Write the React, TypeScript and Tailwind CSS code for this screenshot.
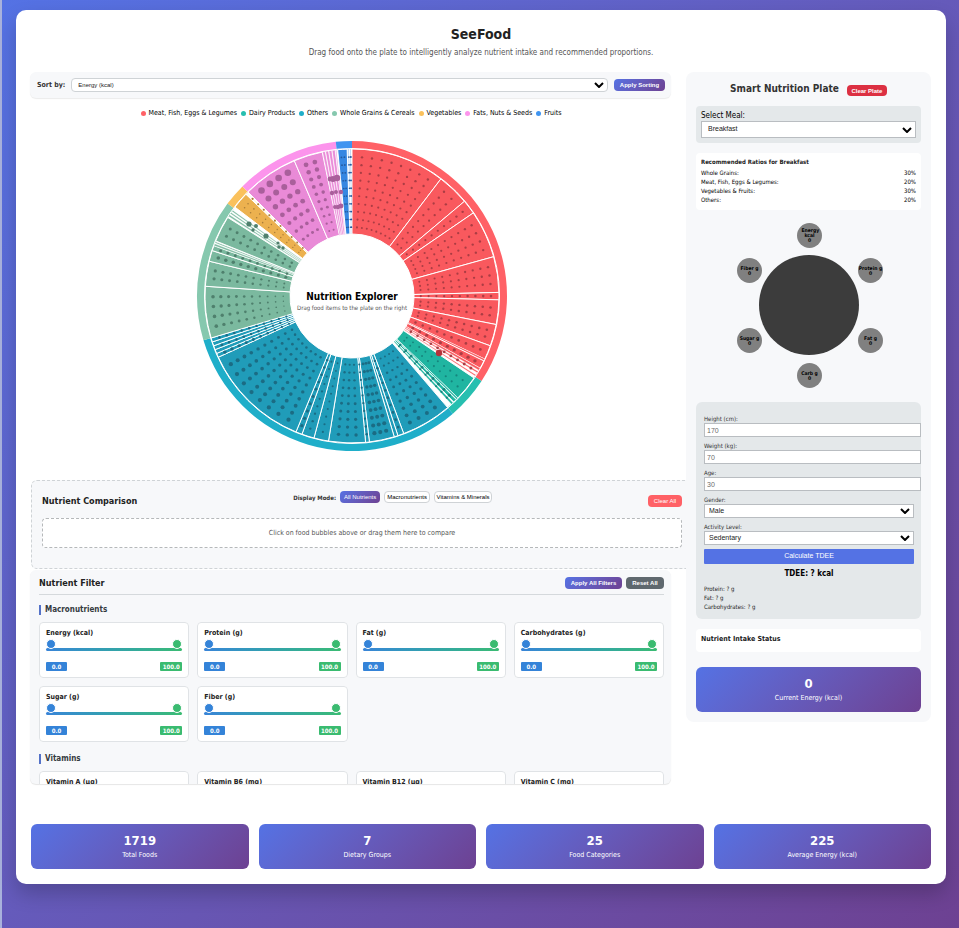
import React from "react";
import { clsx } from "clsx";

type Slice = { from: number; to: number; cols: number; r: number; shrink?: number; rows?: number; step?: number };
type Group = {
  name: string;
  ring: string;
  fill: string;
  from: number;
  to: number;
  dot: string;
  slices: Slice[];
};

const groups: Group[] = [
  {
    name: "Meat, Fish, Eggs & Legumes", ring: "#ff6166", fill: "#f9595e", from: 0, to: 123.3, dot: "#ab3d44",
    slices: [
      { from: 0, to: 37.2, cols: 8, r: 1.2 },
      { from: 37.2, to: 49.9, cols: 2, r: 1.2 },
      { from: 49.9, to: 55.6, cols: 1, r: 1.2 },
      { from: 55.6, to: 74.5, cols: 4, r: 1.2 },
      { from: 74.5, to: 88.6, cols: 3, r: 1.2 },
      { from: 88.6, to: 91.5, cols: 1, r: 1.3 },
      { from: 91.5, to: 101.2, cols: 2, r: 1.3 },
      { from: 101.2, to: 109.8, cols: 2, r: 1.3 },
      { from: 109.8, to: 115.4, cols: 1, r: 1.4 },
      { from: 115.4, to: 116.2, cols: 0, r: 1 },
      { from: 116.2, to: 119.4, cols: 1, r: 1.7 },
      { from: 119.4, to: 120.3, cols: 0, r: 1 },
      { from: 120.9, to: 121.5, cols: 1, r: 1.5 },
      { from: 122.5, to: 123, cols: 0, r: 1 },
    ],
  },
  {
    name: "Dairy Products", ring: "#27bfb0", fill: "#20b5a1", from: 123.3, to: 139.4, dot: "#15857d",
    slices: [
      { from: 123.9, to: 133.9, cols: 2, r: 1.1 },
      { from: 134, to: 134.6, cols: 0, r: 1 },
      { from: 134.8, to: 136.2, cols: 1, r: 1.5 },
      { from: 136.6, to: 137.4, cols: 1, r: 1.1 },
    ],
  },
  {
    name: "Others", ring: "#1faec9", fill: "#209cb9", from: 139.4, to: 253.4, dot: "#1b6c84",
    slices: [
      { from: 139.4, to: 159.4, cols: 4, r: 2, shrink: 0.5 },
      { from: 159.4, to: 161.8, cols: 1, r: 1.4 },
      { from: 161.8, to: 163.3, cols: 0, r: 1 },
      { from: 163.3, to: 173.2, cols: 3, r: 2.1, shrink: 0.3 },
      { from: 173.2, to: 174.7, cols: 1, r: 1.2 },
      { from: 174.7, to: 189.2, cols: 3, r: 1.7, shrink: 0.35 },
      { from: 189.2, to: 195, cols: 1, r: 1.1 },
      { from: 195, to: 199.9, cols: 1, r: 1.2 },
      { from: 199.9, to: 202.4, cols: 1, r: 1.7, shrink: 0.3 },
      { from: 202.4, to: 245.4, cols: 8, r: 2.1, shrink: 0.4 },
      { from: 245.4, to: 247, cols: 1, r: 1.7, shrink: 0.4 },
      { from: 247, to: 248.6, cols: 0, r: 1 },
      { from: 248.6, to: 250.2, cols: 1, r: 1.3 },
      { from: 250.2, to: 251.8, cols: 0, r: 1 },
      { from: 251.8, to: 253.4, cols: 1, r: 1.3 },
    ],
  },
  {
    name: "Whole Grains & Cereals", ring: "#86c8ae", fill: "#7bb99f", from: 253.4, to: 306.6, dot: "#4f806d",
    slices: [
      { from: 253.4, to: 273.8, cols: 4, r: 1.8, shrink: 0.6 },
      { from: 273.8, to: 283.7, cols: 2, r: 1.6, shrink: 0.4 },
      { from: 283.7, to: 288, cols: 1, r: 1.8 },
      { from: 288, to: 290, cols: 1, r: 1.5 },
      { from: 290.1, to: 290.8, cols: 0, r: 1 },
      { from: 291.2, to: 291.7, cols: 0, r: 1 },
      { from: 292, to: 302.3, cols: 2, r: 1.5 },
      { from: 302.9, to: 303.5, cols: 0, r: 1 },
      { from: 304.1, to: 304.6, cols: 0, r: 1 },
      { from: 305.2, to: 305.7, cols: 0, r: 1 },
    ],
  },
  {
    name: "Vegetables", ring: "#fac15c", fill: "#ecb14f", from: 306.6, to: 315, dot: "#a97d39",
    slices: [
      { from: 307.2, to: 313.8, cols: 2, r: 0.8 },
      { from: 314.3, to: 314.4, cols: 1, r: 1.1 },
    ],
  },
  {
    name: "Fats, Nuts & Seeds", ring: "#fc94ec", fill: "#e98ad7", from: 315, to: 354, dot: "#a95f9b",
    slices: [
      { from: 315, to: 336.9, cols: 4, r: 3.3, shrink: 0.55, rows: 7, step: 10.7 },
      { from: 336.9, to: 348.3, cols: 2, r: 2.4, shrink: 0.6 },
      { from: 348.5, to: 349.4, cols: 0, r: 1 },
      { from: 349.7, to: 350.7, cols: 0, r: 1 },
      { from: 351, to: 352, cols: 0, r: 1 },
      { from: 352.3, to: 353.3, cols: 0, r: 1 },
      { from: 353.6, to: 353.9, cols: 0, r: 1 },
    ],
  },
  {
    name: "Fruits", ring: "#3f94f0", fill: "#3687e2", from: 354, to: 360, dot: "#24599d",
    slices: [
      { from: 354.4, to: 358.1, cols: 2, r: 0.9 },
      { from: 358.6, to: 358.8, cols: 1, r: 0.9 },
      { from: 359.4, to: 359.6, cols: 1, r: 1 },
    ],
  },
];

const at = (radius: number, deg: number) => {
  const a = (deg * Math.PI) / 180;
  return [radius * Math.sin(a), -radius * Math.cos(a)];
};

const sector = (r0: number, r1: number, from: number, to: number) => {
  const large = to - from > 180 ? 1 : 0;
  const [ax, ay] = at(r1, from);
  const [bx, by] = at(r1, to);
  const [cx, cy] = at(r0, to);
  const [dx, dy] = at(r0, from);
  return `M${ax} ${ay}A${r1} ${r1} 0 ${large} 1 ${bx} ${by}L${cx} ${cy}A${r0} ${r0} 0 ${large} 0 ${dx} ${dy}Z`;
};

function Sunburst() {
  return (
    <svg viewBox="-160 -160 320 320" className="h-[320px] w-[320px]" role="img" aria-label="Nutrition Explorer">
      {groups.map((g) => (
        <g key={g.name}>
          <path d={sector(147, 155, g.from, g.to)} fill={g.ring} />
          {g.slices.map((s) => (
            <path
              key={s.from}
              d={sector(62, 147, s.from, s.to)}
              fill={g.fill}
              stroke="#fff"
              strokeWidth={s.to - s.from > 1 ? 1 : 0.3}
            />
          ))}
        </g>
      ))}
      <circle r="147.5" fill="none" stroke="#fff" strokeWidth="1" />
      {groups.map((g) => (
        <g key={g.name} fill={g.dot}>
          {g.slices.map((s) => {
            const count = s.rows ?? 10;
            return Array.from({ length: count }, (_, row) =>
              Array.from({ length: s.cols }, (_, c) => {
                const [x, y] = at(139 - row * (s.step ?? 7.8), s.from + ((c + 1) * (s.to - s.from)) / (s.cols + 1));
                const r = s.r * (1 - ((s.shrink ?? 0.15) * row) / (count - 1));
                return <circle key={`${s.from}-${row}-${c}`} cx={x} cy={y} r={r} />;
              })
            );
          })}
        </g>
      ))}
      <g fill="#a95f9b">
        {[[-22, -117, 2.4], [-19, -117, 3], [-15, -118, 3.2], [-20, -103, 2.2], [-16, -104, 2], [-11, -104, 2.2], [-17, -89, 2], [-14, -89, 2.2], [-11, -90, 2.4]].map(([x, y, r]) => (
          <circle key={`${x},${y}`} cx={x} cy={y} r={r} />
        ))}
      </g>
      <g fill="#4f806d">
        {[[-103, -72, 2.6], [-96, -70, 2], [-99, -66, 1.7], [-86, -60, 2.6], [-74, -53, 1.6], [-73, -49, 1.8], [-69, -48, 1.7]].map(([x, y, r]) => (
          <circle key={`${x},${y}`} cx={x} cy={y} r={r} />
        ))}
      </g>
      <circle cx="87" cy="57" r="3.2" fill="#b5333a" />
      <text y="4" textAnchor="middle" fontSize="10" fontWeight="700">Nutrition Explorer</text>
      <text y="14" textAnchor="middle" fontSize="6" fill="#555">Drag food items to the plate on the right</text>
    </svg>
  );
}

function Chevron() {
  return (
    <svg viewBox="0 0 10 6" className="pointer-events-none absolute top-1/2 right-1 h-1.5 w-2.5 -translate-y-1/2" aria-hidden="true">
      <path d="M1 1l4 4 4-4" fill="none" stroke="#000" strokeWidth="2" />
    </svg>
  );
}

function Select({ id, options, className, wrap }: { id: string; options: string[]; className?: string; wrap?: string }) {
  return (
    <div className={clsx("relative", wrap)}>
      <select
        id={id}
        className={clsx(
          "block w-full appearance-none border bg-white font-['Liberation_Sans',sans-serif] text-[#222]",
          className
        )}
      >
        {options.map((o) => (
          <option key={o}>{o}</option>
        ))}
      </select>
      <Chevron />
    </div>
  );
}

const arial = "font-['Liberation_Sans',sans-serif]";
const brand = "bg-linear-135 from-[#5472e4] to-[#6d4192]";

function Stat({ value, label }: { value: string; label: string }) {
  return (
    <div className={clsx(brand, "flex h-[45px] flex-col items-center justify-center rounded-md pt-px text-white")}>
      <div className="text-[13px] leading-4 font-bold">{value}</div>
      <div className="text-[7px] leading-3">{label}</div>
    </div>
  );
}

const thumb =
  "pointer-events-none absolute inset-x-0 top-0 m-0 h-2.5 w-full appearance-none bg-transparent [&::-webkit-slider-thumb]:pointer-events-auto [&::-webkit-slider-thumb]:h-2.5 [&::-webkit-slider-thumb]:w-2.5 [&::-webkit-slider-thumb]:appearance-none [&::-webkit-slider-thumb]:rounded-full [&::-webkit-slider-thumb]:border [&::-webkit-slider-thumb]:border-solid [&::-webkit-slider-thumb]:border-white";

function FilterCard({ name }: { name: string }) {
  return (
    <fieldset className="h-14 rounded border border-[#e0e3e6] bg-white px-1.5 pt-1.5">
      <div className="text-[7px] leading-[9px] font-bold text-[#222]">{name}</div>
      <div className="relative mt-px h-3">
        <div className="absolute inset-x-0 top-[9px] h-[3px] rounded-sm bg-linear-to-r from-[#3984d8] to-[#3bbb72]" />
        <input type="range" aria-label={`${name} minimum`} defaultValue={0} className={clsx(thumb, "[&::-webkit-slider-thumb]:bg-[#3483d8]")} />
        <input type="range" aria-label={`${name} maximum`} defaultValue={100} className={clsx(thumb, "[&::-webkit-slider-thumb]:bg-[#3abb70]")} />
      </div>
      <div className="mt-[11px] flex justify-between text-center text-[6px] leading-[9px] font-bold text-white">
        <span className="w-[21px] rounded-[1px] bg-[#3483d8]">0.0</span>
        <span className="w-[22px] rounded-[1px] bg-[#3abb70]">100.0</span>
      </div>
    </fieldset>
  );
}

function FilterGroup({ title, items }: { title: string; items: string[] }) {
  return (
    <section className="mb-3">
      <h3 className="mb-[7px] border-l-2 border-[#5472c8] pl-1 text-[8px] leading-[10px] font-bold text-[#343a40]">{title}</h3>
      <div className="grid grid-cols-4 gap-2">
        {items.map((i) => (
          <FilterCard key={i} name={i} />
        ))}
      </div>
    </section>
  );
}

const nodes = [
  { text: "Energy kcal", pos: "left-[101px] top-[13px]" },
  { text: "Protein g", pos: "left-[162px] top-[48px]" },
  { text: "Fat g", pos: "left-[162px] top-[118px]" },
  { text: "Carb g", pos: "left-[101px] top-[153px]" },
  { text: "Sugar g", pos: "left-[41px] top-[118px]" },
  { text: "Fiber g", pos: "left-[41px] top-[48px]" },
];

function Plate() {
  return (
    <div className="relative mx-auto h-48 w-[225px]">
      <div className="absolute top-[45px] left-[63px] h-[100px] w-[100px] rounded-full bg-[#3c3c3c]" />
      {nodes.map((n) => (
        <div
          key={n.text}
          className={clsx(
            "absolute flex h-[25px] w-[25px] flex-col items-center justify-center rounded-full bg-[#808080] text-center text-[5px] leading-[5px] font-bold text-black",
            n.pos
          )}
        >
          <span className={n.text === "Energy kcal" ? "w-4" : "whitespace-nowrap"}>{n.text}</span>
          <span>0</span>
        </div>
      ))}
    </div>
  );
}

function Field({ id, label, children }: { id: string; label: string; children: React.ReactNode }) {
  return (
    <div className="mb-1">
      <label htmlFor={id} className="block text-[6px] leading-[9px] text-[#333]">{label}</label>
      {children}
    </div>
  );
}

function NumberField({ id, label, value }: { id: string; label: string; value: string }) {
  return (
    <Field id={id} label={label}>
      <div className="-mr-[7px]">
        <input
          id={id}
          placeholder={value}
          className={clsx(arial, "block h-3.5 w-full border border-[#b9bdc1] bg-white px-0.5 text-[7px] placeholder:text-[#6b6b6b]")}
        />
      </div>
    </Field>
  );
}

export default function App() {
  const ratios = [
    ["Whole Grains:", "30%"],
    ["Meat, Fish, Eggs & Legumes:", "20%"],
    ["Vegetables & Fruits:", "30%"],
    ["Others:", "20%"],
  ];
  return (
    <div className="min-h-screen border-l-2 border-[#a9b2dc] bg-linear-135 from-[#5472e4] to-[#6d4192] pt-2.5 pr-[13px] pb-11 pl-3.5 font-['DejaVu_Sans_Condensed','DejaVu_Sans',sans-serif] text-black">
      <div className="rounded-[10px] bg-white p-[15px] shadow-[0_10px_20px_rgba(0,0,0,0.2)]">
        <header className="h-[47px] text-center">
          <h1 className="text-[14px] leading-[18px] font-bold text-[#222]">SeeFood</h1>
          <p className="mt-[3px] text-[8px] leading-[14px] text-[#555]">
            Drag food onto the plate to intelligently analyze nutrient intake and recommended proportions.
          </p>
        </header>

        <div className="grid grid-cols-[minmax(0,1fr)_245px] items-start gap-[15px]">
          <main>
            <div className="-ml-px flex h-[26px] items-center gap-1.5 rounded-md bg-[#f7f8fa] pr-1.5 pl-[7px] shadow-[0_1px_1px_rgba(0,0,0,0.08)]">
              <label htmlFor="sort" className="text-[7px] font-bold text-[#333]">Sort by:</label>
              <Select id="sort" wrap="flex-1" options={["Energy (kcal)"]} className="h-3.5 rounded-sm border-[#cfd3d6] pl-1.5 text-[6px]" />
              <button className={clsx(arial, brand, "h-3 w-[51px] rounded-sm text-[6px] font-bold text-white")}>Apply Sorting</button>
            </div>

            <ul className="mt-[9px] flex h-3 items-center justify-center gap-1 text-[7px] leading-3">
              {groups.map((g) => (
                <li key={g.name} className="flex items-center gap-[3px] whitespace-nowrap">
                  <svg viewBox="0 0 6 6" className="h-[5px] w-[5px]" aria-hidden="true">
                    <circle cx="3" cy="3" r="3" fill={g.ring} />
                  </svg>
                  {g.name}
                </li>
              ))}
            </ul>

            <div className="flex h-[361px] justify-center pt-[17px] pl-0.5">
              <Sunburst />
            </div>

            <section className="-mr-[22px] h-[89px] rounded-md border border-dashed border-[#cfd3d6] bg-[#f7f8fa] px-2.5 pt-2.5">
              <div className="flex h-3 items-start justify-between">
                <h2 className="pt-1 text-[9px] leading-3 font-bold text-[#222]">Nutrient Comparison</h2>
                <div className="flex items-center gap-1">
                  <span className="text-[6px] font-bold text-[#333]">Display Mode:</span>
                  <button className={clsx(arial, brand, "h-3 w-10 rounded-sm text-[6px] text-white")}>All Nutrients</button>
                  <button className={clsx(arial, "h-3 w-[46px] rounded-sm border border-[#cfd3d6] bg-white text-[6px] leading-none")}>Macronutrients</button>
                  <button className={clsx(arial, "h-3 w-[58px] rounded-sm border border-[#cfd3d6] bg-white text-[6px] leading-none whitespace-nowrap")}>Vitamins &amp; Minerals</button>
                </div>
                <button className={clsx(arial, "mt-1 h-3 w-[34px] rounded-sm bg-[#ff6166] text-[6px] text-white")}>Clear All</button>
              </div>
              <div className="mt-[15px] flex h-[30px] items-center justify-center rounded-sm border border-dashed border-[#b5b8ba] bg-white text-[7px] text-[#555]">
                Click on food bubbles above or drag them here to compare
              </div>
            </section>

            <section className="mt-px -ml-px h-[214px] overflow-hidden rounded-md bg-[#f7f8fa] pt-1.5 pr-[7px] pl-[9px] shadow-[0_1px_1px_rgba(0,0,0,0.1)]">
              <div className="mb-2.5 flex h-[19px] items-start gap-1 border-b border-[#d5d9dc]">
                <h2 className="flex-1 text-[9px] leading-[14px] font-bold text-[#222]">Nutrient Filter</h2>
                <button className={clsx(arial, brand, "mt-px h-3 w-[57px] rounded-sm text-[6px] font-bold text-white")}>Apply All Filters</button>
                <button className={clsx(arial, "mt-px h-3 w-[38px] rounded-sm bg-[#5f686e] text-[6px] font-bold text-white")}>Reset All</button>
              </div>
              <FilterGroup title="Macronutrients" items={["Energy (kcal)", "Protein (g)", "Fat (g)", "Carbohydrates (g)", "Sugar (g)", "Fiber (g)"]} />
              <FilterGroup title="Vitamins" items={["Vitamin A (μg)", "Vitamin B6 (mg)", "Vitamin B12 (μg)", "Vitamin C (mg)"]} />
            </section>
          </main>

          <aside className="relative z-10 rounded-lg bg-[#f7f8fa] p-2.5">
            <div className="flex h-6 items-start justify-center gap-2">
              <h2 className="text-[10px] leading-[14px] font-bold text-[#333]">Smart Nutrition Plate</h2>
              <button className={clsx(arial, "mt-[3px] h-[11px] w-10 rounded-sm bg-[#dc3042] text-[6px] leading-none font-bold text-white")}>Clear Plate</button>
            </div>

            <div className="h-[37px] rounded bg-[#e4e8ea] px-[5px] pt-[5px]">
              <label htmlFor="meal" className="block text-[8px] leading-[10px]">Select Meal:</label>
              <Select id="meal" options={["Breakfast"]} className="h-[17px] border-[#b9bdc1] pl-1.5 text-[7px]" />
            </div>

            <div className="mt-2.5 h-[57px] rounded bg-white px-[5px] pt-1 text-[6px] leading-[9px]">
              <h3 className="mb-0.5 font-bold text-[#222]">Recommended Ratios for Breakfast</h3>
              {ratios.map(([k, v]) => (
                <div key={k} className="flex justify-between">
                  <span>{k}</span>
                  <span>{v}</span>
                </div>
              ))}
            </div>

            <Plate />

            <form className="h-[217px] rounded-md bg-[#e4e8ea] px-2 pt-3 pr-[7px]" onSubmit={(e) => e.preventDefault()}>
              <NumberField id="height" label="Height (cm):" value="170" />
              <NumberField id="weight" label="Weight (kg):" value="70" />
              <NumberField id="age" label="Age:" value="30" />
              <Field id="gender" label="Gender:">
                <Select id="gender" options={["Male"]} className="h-3.5 border-[#b9bdc1] pl-1 text-[7px]" />
              </Field>
              <Field id="activity" label="Activity Level:">
                <Select id="activity" options={["Sedentary"]} className="h-3.5 border-[#b9bdc1] pl-1 text-[7px]" />
              </Field>
              <button className={clsx(arial, "mt-px block h-[15px] w-full rounded-[1px] bg-[#5472e4] text-[7px] text-white")}>Calculate TDEE</button>
              <p className="py-1 text-center text-[8px] leading-3 font-bold">TDEE: ? kcal</p>
              <div className="text-[6px] leading-[9px] text-[#222]">
                <p>Protein: ? g</p>
                <p>Fat: ? g</p>
                <p>Carbohydrates: ? g</p>
              </div>
            </form>

            <h3 className="mt-2.5 h-[23px] rounded bg-white px-[5px] pt-1 text-[7px] leading-3 font-bold text-[#222]">Nutrient Intake Status</h3>

            <div className="mt-[15px]">
              <Stat value="0" label="Current Energy (kcal)" />
            </div>
          </aside>
        </div>

        <div className="mt-10 grid grid-cols-4 gap-2.5">
          <Stat value="1719" label="Total Foods" />
          <Stat value="7" label="Dietary Groups" />
          <Stat value="25" label="Food Categories" />
          <Stat value="225" label="Average Energy (kcal)" />
        </div>
      </div>
    </div>
  );
}
